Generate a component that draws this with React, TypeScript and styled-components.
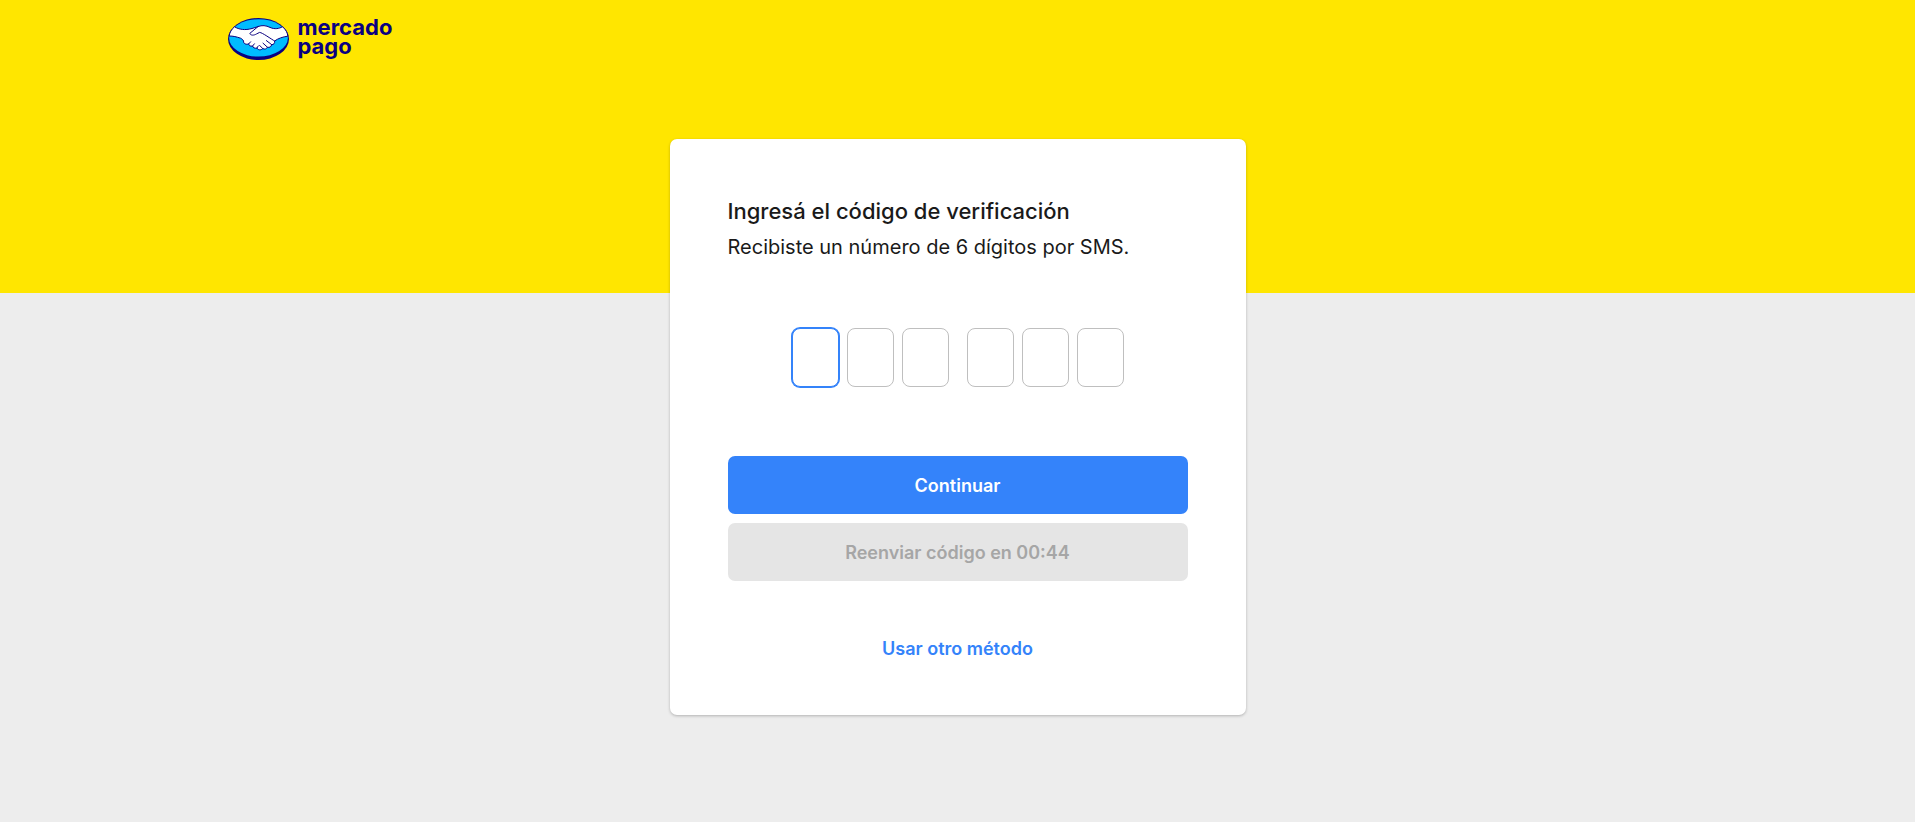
import React from 'react';
import styled, { createGlobalStyle, css } from 'styled-components';

const colors = {
  yellow: '#ffe600',
  page: '#ededed',
  blue: '#3483fa',
  navy: '#0a0080',
  cyan: '#00bcff',
  text: '#1a1a1a',
};

const GlobalStyle = createGlobalStyle`
  *, *::before, *::after { box-sizing: border-box; }
  body {
    margin: 0;
    background: ${colors.page};
    color: ${colors.text};
    font-family: Inter, "Liberation Sans", sans-serif;
  }
`;

const Header = styled.header`
  height: 293px;
  padding: 18px 24px 0;
  background: ${colors.yellow};
`;

const HeaderInner = styled.div`
  max-width: 1460px;
  margin: 0 auto;
`;

const LogoLink = styled.a`
  display: inline-flex;
  align-items: flex-start;
  gap: 9px;
  color: ${colors.navy};
  text-decoration: none;
`;

const Wordmark = styled.span`
  display: flex;
  flex-direction: column;
  font-size: 22px;
  font-weight: 700;
  line-height: 19px;
`;

const Main = styled.main`
  display: flex;
  justify-content: center;
  margin-top: -154px;
  padding: 0 16px 48px;
`;

const Card = styled.form`
  width: 100%;
  max-width: 576px;
  padding: 58px 58px 37px;
  border-radius: 7px;
  background: #fff;
  box-shadow: 0 1px 3px rgba(0, 0, 0, 0.25);
`;

const Title = styled.h1`
  margin: 0 0 8px;
  font-size: 22px;
  font-weight: 500;
  line-height: 28px;
`;

const Subtitle = styled.p`
  margin: 0;
  font-size: 20px;
  font-weight: 400;
  line-height: 28px;
`;

const CodeFields = styled.fieldset`
  display: flex;
  justify-content: center;
  gap: 18px;
  margin: 67px 0 69px;
  padding: 0;
  border: 0;
`;

const DigitGroup = styled.div`
  display: flex;
  gap: 8px;
`;

const Digit = styled.input<{ $active: boolean }>`
  width: 47px;
  height: 59px;
  padding: 0;
  border: 1px solid ${(p) => (p.$active ? colors.blue : '#bfbfbf')};
  border-radius: 8px;
  outline: none;
  background: #fff;
  color: ${colors.text};
  font: 400 24px/28px Inter, sans-serif;
  text-align: center;
  ${(p) => p.$active && css`box-shadow: 0 0 0 1px ${colors.blue};`}
`;

const Actions = styled.div`
  display: flex;
  flex-direction: column;
  gap: 9px;
`;

const controlText = css`
  font-family: inherit;
  font-size: 18px;
  font-weight: 600;
  line-height: 24px;
`;

const Button = styled.button`
  height: 58px;
  padding: 2px 16px 0;
  border: 0;
  border-radius: 7px;
  background: ${colors.blue};
  color: #fff;
  cursor: pointer;
  ${controlText}

  &:disabled {
    background: #e5e5e5;
    color: #a6a6a6;
    cursor: default;
  }
`;

const OtherMethod = styled.a`
  display: block;
  margin-top: 39px;
  padding: 17px 0;
  color: ${colors.blue};
  text-align: center;
  text-decoration: none;
  ${controlText}
`;

function Handshake() {
  return (
    <svg width="61" height="42" viewBox="0 0 61 42" aria-hidden="true">
      <ellipse cx="30.5" cy="21" rx="30.5" ry="21" fill={colors.navy} />
      <ellipse cx="30.5" cy="19.9" rx="29.4" ry="18.7" fill={colors.cyan} />
      <path
        d="M6.5 8.8C11 11.5 17 12.5 24 10.5L30 8.6C34 7 38 7.4 42 9.4C47 11.6 51 10.6 54.6 8.8C58 11.8 59.6 15 59.8 18.2C55 18.8 50 20.4 46.6 23C47 25.4 45.6 26.8 43.6 26.6C43.4 28.8 41.6 29.8 39.4 29.2C38.6 31 36.6 31.6 34.8 30.6C33 32.4 29.8 32.2 29 30C26.6 30.8 24.8 29.4 24.6 28C22.2 28.6 20.6 27.4 20.8 25.8C18.4 27 15 25.6 15.6 23C14.6 21.6 13.8 20.6 12.6 20.2C8.6 18.8 5 18 1.2 18C1.6 14.6 3.4 11.4 6.5 8.8Z"
        fill="#fff"
        stroke={colors.navy}
        strokeWidth="1"
        strokeLinejoin="round"
      />
      <path
        d="M30 8.6L21.8 15.4C22.8 17.8 26 17.4 28.4 16L31.6 14.4C34.4 14.6 43 21 46.6 23M38.4 22.6L43.6 26.6M35 25.2L39.4 29.2M31.6 27.4L34.8 30.6M20.8 25.8L22.6 23.8M24.6 28L26.4 25.8M29 30L30.2 28"
        fill="none"
        stroke={colors.navy}
        strokeWidth="1"
        strokeLinecap="round"
        strokeLinejoin="round"
      />
    </svg>
  );
}

export default function App() {
  const [code, setCode] = React.useState<string[]>(Array(6).fill(''));
  const [active, setActive] = React.useState(0);

  const setDigit = (index: number, value: string) =>
    setCode((prev) => prev.map((d, i) => (i === index ? value : d)));

  return (
    <>
      <GlobalStyle />
      <Header>
        <HeaderInner>
          <LogoLink href="#">
            <Handshake />
            <Wordmark>
              <span>mercado</span>
              <span>pago</span>
            </Wordmark>
          </LogoLink>
        </HeaderInner>
      </Header>
      <Main>
        <Card onSubmit={(e) => e.preventDefault()}>
          <Title>Ingresá el código de verificación</Title>
          <Subtitle>Recibiste un número de 6 dígitos por SMS.</Subtitle>
          <CodeFields aria-label="Código de verificación">
            {[0, 3].map((start) => (
              <DigitGroup key={start}>
                {[start, start + 1, start + 2].map((i) => (
                  <Digit
                    key={i}
                    $active={i === active}
                    aria-label={`Dígito ${i + 1}`}
                    inputMode="numeric"
                    maxLength={1}
                    value={code[i]}
                    onFocus={() => setActive(i)}
                    onChange={(e) => setDigit(i, e.target.value)}
                  />
                ))}
              </DigitGroup>
            ))}
          </CodeFields>
          <Actions>
            <Button type="submit">Continuar</Button>
            <Button type="button" disabled>
              Reenviar código en 00:44
            </Button>
          </Actions>
          <OtherMethod href="#">Usar otro método</OtherMethod>
        </Card>
      </Main>
    </>
  );
}
